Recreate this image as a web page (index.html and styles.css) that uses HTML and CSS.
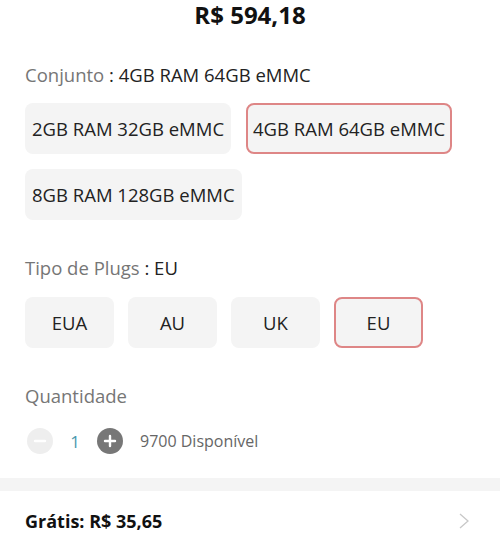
FILE: index.html
```html
<!DOCTYPE html>
<html lang="pt-BR">
<head>
  <meta charset="UTF-8">
  <title>Produto</title>
  <meta name="viewport" content="width=device-width, initial-scale=1">
  <link rel="stylesheet" href="styles.css">
</head>
<body>
  <div class="price">R$ 594,18</div>

  <div class="section">
    <div class="label">Conjunto <span class="value">: 4GB RAM 64GB eMMC</span></div>
    <div class="options">
      <button class="opt">2GB RAM 32GB eMMC</button>
      <button class="opt selected">4GB RAM 64GB eMMC</button>
      <button class="opt">8GB RAM 128GB eMMC</button>
    </div>
  </div>

  <div class="section plugs">
    <div class="label">Tipo de Plugs <span class="value">: EU</span></div>
    <div class="options">
      <button class="opt plug">EUA</button>
      <button class="opt plug">AU</button>
      <button class="opt plug">UK</button>
      <button class="opt plug selected">EU</button>
    </div>
  </div>

  <div class="section qty">
    <div class="label">Quantidade</div>
    <div class="qty-row">
      <span class="circle minus">
        <svg width="26" height="26" viewBox="0 0 26 26"><path d="M8 13h10" stroke="#fff" stroke-width="2.4" stroke-linecap="round"/></svg>
      </span>
      <span class="count">1</span>
      <span class="circle plus">
        <svg width="26" height="26" viewBox="0 0 26 26"><path d="M8 13h10M13 8v10" stroke="#fff" stroke-width="2.4" stroke-linecap="round"/></svg>
      </span>
      <span class="stock">9700 Disponível</span>
    </div>
  </div>

  <div class="band"></div>

  <div class="shipping">
    <span>Grátis: R$ 35,65</span>
    <svg class="chev" width="12" height="16" viewBox="0 0 12 16"><polyline points="2,1 10,8 2,15" fill="none" stroke="#c8c8c8" stroke-width="1.3"/></svg>
  </div>
</body>
</html>
```

FILE: styles.css
```css
body {
  margin: 0;
  font-family: "Open Sans", Arial, sans-serif;
  color: #222;
  background: #fff;
}
.price {
  text-align: center;
  font-size: 24px;
  font-weight: 700;
  line-height: 30px;
  padding-top: 0;
  color: #111;
}
.section { padding: 0 25px; }
.label {
  font-size: 18.5px;
  line-height: 24px;
  color: #767676;
  margin-top: 33px;
}
.label .value { color: #222; }
.options {
  display: flex;
  flex-wrap: wrap;
  gap: 15px;
  margin-top: 16px;
}
.opt {
  font-family: inherit;
  font-size: 18.5px;
  color: #222;
  background: #f4f4f4;
  border: 2px solid transparent;
  border-radius: 8px;
  height: 51px;
  padding: 0 5px;
  cursor: pointer;
}
.opt.selected { border-color: #de8686; }
.plugs .label { margin-top: 36px; }
.plugs .options { gap: 14px; margin-top: 17px; }
.opt.plug { width: 89px; }
.qty .label { margin-top: 36px; }
.qty-row {
  display: flex;
  align-items: center;
  margin-top: 20px;
  height: 26px;
}
.circle {
  width: 26px;
  height: 26px;
  border-radius: 50%;
  display: flex;
}
.circle.minus { background: #eee; margin-left: 2px; }
.circle.plus { background: #777; }
.count {
  font-size: 17px;
  color: #4a98ae;
  width: 44px;
  text-align: center;
}
.stock {
  font-size: 16px;
  color: #666;
  margin-left: 17px;
}
.band {
  height: 13px;
  background: #f4f4f4;
  margin-top: 24px;
}
.shipping {
  display: flex;
  justify-content: space-between;
  align-items: center;
  padding: 0 30px 0 25px;
  margin-top: 18px;
  font-size: 18px;
  font-weight: 700;
  line-height: 24px;
  color: #111;
}
```
